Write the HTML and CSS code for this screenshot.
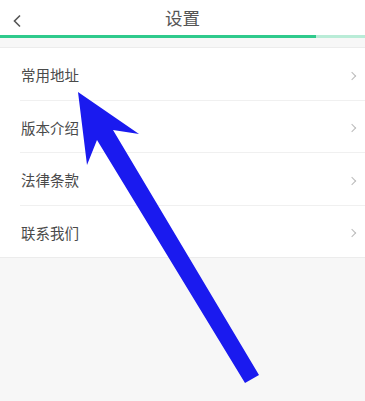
FILE: index.html
```html
<!DOCTYPE html>
<html lang="zh-CN">
<head>
  <meta charset="UTF-8">
  <meta name="viewport" content="width=device-width, initial-scale=1.0">
  <title>设置</title>
  <link rel="stylesheet" href="styles.css">
</head>
<body>
  <header class="topbar">
    <span class="back">
      <svg width="10" height="14" viewBox="0 0 10 14"><path d="M8 1.5 L2.5 7 L8 12.5" fill="none" stroke="#555" stroke-width="1.6"/></svg>
    </span>
    <h1>设置</h1>
  </header>
  <div class="progress"><div class="progress-fill"></div></div>

  <!-- Lista de opciones -->
  <ul class="menu">
    <li><span>常用地址</span><i class="chev"></i></li>
    <li><span>版本介绍</span><i class="chev"></i></li>
    <li><span>法律条款</span><i class="chev"></i></li>
    <li><span>联系我们</span><i class="chev"></i></li>
  </ul>

  <!-- Flecha de anotación -->
  <svg class="arrow" width="365" height="401" viewBox="0 0 365 401">
    <polygon points="78,92 139,134 113,130 259,375 245,383 97,140 87,165" fill="#1a1aef"/>
  </svg>
</body>
</html>
```

FILE: styles.css
```css
body {
  margin: 0;
  font-family: "Noto Sans CJK SC", "Noto Sans", sans-serif;
  background-color: #f7f7f7;
  height: 401px;
  overflow: hidden;
  position: relative;
}
.topbar {
  height: 35px;
  background-color: #fff;
  display: flex;
  align-items: center;
  justify-content: center;
  position: relative;
}
.back {
  position: absolute;
  left: 12px;
  top: 9px;
}
.topbar h1 {
  margin: 0;
  font-size: 17.5px;
  font-weight: normal;
  color: #555;
  line-height: 1;
}
.progress {
  height: 3px;
  background-color: #b9ecd7;
}
.progress-fill {
  width: 316px;
  height: 100%;
  background-color: #2fca8c;
}
.menu {
  list-style: none;
  margin: 9px 0 0;
  padding: 0 0 0 20px;
  background-color: #fff;
  border-top: 1px solid #ececec;
  border-bottom: 1px solid #ececec;
}
.menu li {
  height: 51.5px;
  display: flex;
  align-items: center;
  justify-content: space-between;
  padding-right: 10px;
  border-bottom: 1px solid #f0f0f0;
  font-size: 14.5px;
  color: #4a4a4a;
}
.menu li:last-child {
  border-bottom: none;
}
.menu li span {
  margin-left: 1px;
  margin-top: 2px;
}
.chev {
  width: 5px;
  height: 5px;
  border-top: 1px solid #bbb;
  border-right: 1px solid #bbb;
  transform: rotate(45deg);
  margin-top: 4px;
}
.arrow {
  position: absolute;
  left: 0;
  top: 0;
}
```
